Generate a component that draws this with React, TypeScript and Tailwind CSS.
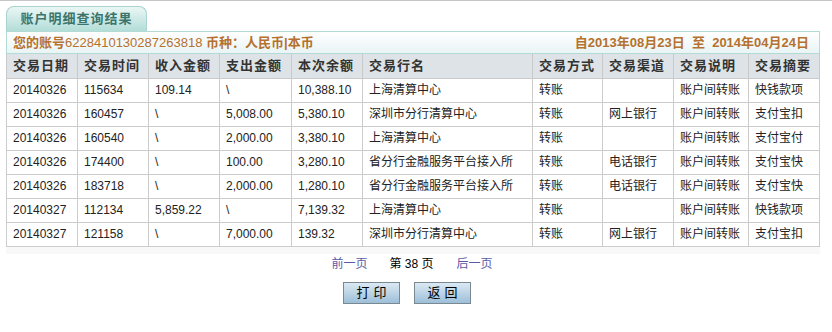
import React from "react";

const cols = [71, 71, 71, 72, 71, 170, 70, 71, 75, 71];
const headers = ["交易日期", "交易时间", "收入金额", "支出金额", "本次余额", "交易行名", "交易方式", "交易渠道", "交易说明", "交易摘要"];
const rows = [
  ["20140326", "115634", "109.14", "\\", "10,388.10", "上海清算中心", "转账", "", "账户间转账", "快钱款项"],
  ["20140326", "160457", "\\", "5,008.00", "5,380.10", "深圳市分行清算中心", "转账", "网上银行", "账户间转账", "支付宝扣"],
  ["20140326", "160540", "\\", "2,000.00", "3,380.10", "上海清算中心", "转账", "", "账户间转账", "支付宝付"],
  ["20140326", "174400", "\\", "100.00", "3,280.10", "省分行金融服务平台接入所", "转账", "电话银行", "账户间转账", "支付宝快"],
  ["20140326", "183718", "\\", "2,000.00", "1,280.10", "省分行金融服务平台接入所", "转账", "电话银行", "账户间转账", "支付宝快"],
  ["20140327", "112134", "5,859.22", "\\", "7,139.32", "上海清算中心", "转账", "", "账户间转账", "快钱款项"],
  ["20140327", "121158", "\\", "7,000.00", "139.32", "深圳市分行清算中心", "转账", "网上银行", "账户间转账", "支付宝扣"],
];

const font = { fontFamily: '"Liberation Sans", "Noto Sans CJK SC", sans-serif' };

export default function App() {
  return (
    <div className="w-[832px] h-[332px] bg-white" style={font}>
      <div className="h-px bg-[#c6c6c6]" />
      <div className="ml-[6px] w-[814px]">
        <div className="mt-[5px] w-[141px] h-[25px] rounded-t-[8px] border border-b-0 border-[#a9d3ce] bg-gradient-to-b from-[#eaf6f4] to-[#b3ddd8] flex items-center justify-center text-[13px] font-bold text-[#3a756d] tracking-[1px]">
          账户明细查询结果
        </div>
        <div className="h-[23px] border border-[#b3dbd6] bg-gradient-to-b from-[#ffffff] to-[#e9f4f5] flex items-center justify-between pl-[6px] pr-[10px] text-[13px] text-[#b5712e]">
          <div>
            <span className="font-bold">您的账号</span>
            <span>6228410130287263818</span>
            <span className="font-bold"> 币种：人民币|本币</span>
          </div>
          <div className="font-bold">
            自2013年08月23日&nbsp;&nbsp;至&nbsp;&nbsp;2014年04月24日
          </div>
        </div>
        <div className="bg-[#f8f8f8] pb-[7px]">
          <table className="table-fixed border-collapse w-[813px]">
            <colgroup>
              {cols.map((w, i) => (
                <col key={i} style={{ width: w }} />
              ))}
            </colgroup>
            <thead>
              <tr className="h-[24px] bg-[#dde3e6]">
                {headers.map((h) => (
                  <th key={h} className="border border-[#c9c9c9] border-t-0 text-left pl-[6px] text-[13px] font-bold text-[#333333] tracking-[1px] whitespace-nowrap">
                    {h}
                  </th>
                ))}
              </tr>
            </thead>
            <tbody>
              {rows.map((r, i) => (
                <tr key={i} className="h-[24px] bg-white">
                  {r.map((c, j) => (
                    <td key={j} className="border border-[#cccccc] pl-[6px] text-[12px] text-[#222222] whitespace-nowrap overflow-hidden">
                      {c}
                    </td>
                  ))}
                </tr>
              ))}
            </tbody>
          </table>
        </div>
      </div>
      <div className="flex justify-center items-center h-[18px] mt-px text-[12px] pr-[8px]">
        <span className="text-[#5a5aa8]">前一页</span>
        <span className="ml-[22px] text-black">第 38 页</span>
        <span className="ml-[23px] text-[#5a5aa8]">后一页</span>
      </div>
      <div className="flex justify-center gap-[14px] mt-[9px] pr-[18px]">
        <button className="w-[57px] h-[22px] border border-[#7a8892] bg-gradient-to-b from-[#dbe9f3] to-[#9dbfd8] text-[13px] text-black tracking-[4px] pl-[4px]">
          打印
        </button>
        <button className="w-[57px] h-[22px] border border-[#7a8892] bg-gradient-to-b from-[#dbe9f3] to-[#9dbfd8] text-[13px] text-black tracking-[4px] pl-[4px]">
          返回
        </button>
      </div>
    </div>
  );
}
